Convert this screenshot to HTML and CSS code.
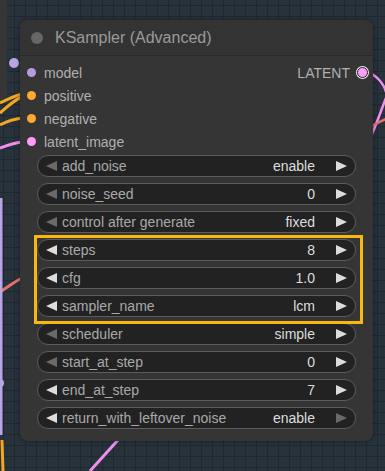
FILE: index.html
```html
<!DOCTYPE html>
<html>
<head>
<meta charset="utf-8">
<link rel="stylesheet" href="styles.css">
</head>
<body>
<div class="canvas">
  <svg class="wires" width="385" height="471" viewBox="0 0 385 471">
    <path d="M0 103 C8 99 14 96 22 94" stroke="#f5a623" stroke-width="3" fill="none"/>
    <path d="M0 113 C8 106 14 100 22 97" stroke="#f5a623" stroke-width="3" fill="none"/>
    <path d="M0 125 C8 121 14 119 22 118" stroke="#f5a623" stroke-width="3" fill="none"/>
    <path d="M0 148 C8 145 14 143 22 142" stroke="#f08ef0" stroke-width="3" fill="none"/>
    <path d="M0 292 C8 287 14 282 22 278" stroke="#e8706a" stroke-width="3" fill="none"/>
    <path d="M1 198 L1 435" stroke="#b9a4e6" stroke-width="3" fill="none"/>
    <path d="M2 440 L3 471" stroke="#f5a623" stroke-width="3" fill="none"/>
    <path d="M118 440 L90 471" stroke="#f08ef0" stroke-width="3" fill="none"/>
    <path d="M366 72 C376 74 384 84 386 92" stroke="#f08ef0" stroke-width="2.5" fill="none"/>
    <path d="M372 134 C378 120 382 108 386 98" stroke="#f08ef0" stroke-width="2.5" fill="none"/>
    <path d="M372 126 C377 123 381 121 386 119" stroke="#e8706a" stroke-width="2.5" fill="none"/>
    <circle cx="0" cy="383" r="4" fill="#b9a4e6"/>
    <circle cx="1" cy="55" r="3" fill="none" stroke="#111" stroke-width="1.2"/>
  </svg>
  <div class="side-node"></div>
  <div class="ghost-dot"></div>

  <div class="node">
    <div class="title">
      <span class="title-dot"></span>
      <span class="title-text">KSampler (Advanced)</span>
    </div>
    <div class="io">
      <div class="row">
        <div class="input"><span class="slot model"></span>model</div>
        <div class="output">LATENT<span class="slot out"></span></div>
      </div>
      <div class="row"><div class="input"><span class="slot cond"></span>positive</div></div>
      <div class="row"><div class="input"><span class="slot cond"></span>negative</div></div>
      <div class="row"><div class="input"><span class="slot latent"></span>latent_image</div></div>
    </div>
    <div class="widgets">
      <div class="widget"><span class="arr left dim"></span><span class="label">add_noise</span><span class="value">enable</span><span class="arr right"></span></div>
      <div class="widget"><span class="arr left dim"></span><span class="label">noise_seed</span><span class="value">0</span><span class="arr right"></span></div>
      <div class="widget"><span class="arr left dim"></span><span class="label">control after generate</span><span class="value">fixed</span><span class="arr right"></span></div>
      <div class="widget"><span class="arr left"></span><span class="label">steps</span><span class="value">8</span><span class="arr right"></span></div>
      <div class="widget"><span class="arr left"></span><span class="label">cfg</span><span class="value">1.0</span><span class="arr right"></span></div>
      <div class="widget"><span class="arr left"></span><span class="label">sampler_name</span><span class="value">lcm</span><span class="arr right"></span></div>
      <div class="widget"><span class="arr left dim"></span><span class="label">scheduler</span><span class="value">simple</span><span class="arr right"></span></div>
      <div class="widget"><span class="arr left dim"></span><span class="label">start_at_step</span><span class="value">0</span><span class="arr right"></span></div>
      <div class="widget"><span class="arr left"></span><span class="label">end_at_step</span><span class="value">7</span><span class="arr right"></span></div>
      <div class="widget"><span class="arr left"></span><span class="label">return_with_leftover_noise</span><span class="value">enable</span><span class="arr right dim"></span></div>
    </div>
    <div class="highlight"></div>
  </div>
</div>
</body>
</html>
```

FILE: styles.css
```css
* { box-sizing: border-box; }
html, body { margin: 0; padding: 0; }
body {
  width: 385px;
  height: 471px;
  overflow: hidden;
  font-family: "Liberation Sans", Arial, sans-serif;
}
.canvas {
  position: relative;
  width: 385px;
  height: 471px;
  background-color: #27323b;
  background-image:
    linear-gradient(to right, #1f2830 1px, transparent 1px),
    linear-gradient(to bottom, #1f2830 1px, transparent 1px);
  background-size: 11px 11px;
  background-position: 3px 5px;
  overflow: hidden;
}
.wires { position: absolute; left: 0; top: 0; }
.side-node {
  position: absolute;
  left: -10px;
  top: -10px;
  width: 17px;
  height: 110px;
  background: #353535;
  border-radius: 0 0 6px 0;
}
.ghost-dot {
  position: absolute;
  left: 9px;
  top: 58px;
  width: 10px;
  height: 10px;
  border-radius: 50%;
  background: #b9a4e6;
}
.node {
  position: absolute;
  left: 20px;
  top: 20px;
  width: 353px;
  height: 421px;
  background: #353535;
  border-radius: 8px;
  box-shadow: 0 0 4px rgba(0, 0, 0, 0.45);
}
.title {
  height: 36px;
  display: flex;
  align-items: center;
  background: #333333;
  border-radius: 8px 8px 0 0;
  border-bottom: 1px solid #2a2a2a;
  padding-left: 11px;
}
.title-dot {
  width: 12px;
  height: 12px;
  border-radius: 50%;
  background: #666666;
  margin-right: 12px;
}
.title-text {
  font-size: 16px;
  color: #9a9a9a;
}
.io { padding-top: 5px; }
.row {
  height: 23px;
  display: flex;
  align-items: center;
  justify-content: space-between;
  font-size: 14px;
  color: #b0b0b0;
}
.input {
  display: flex;
  align-items: center;
  padding-left: 7px;
}
.output {
  display: flex;
  align-items: center;
  padding-right: 5px;
}
.slot {
  width: 9px;
  height: 9px;
  border-radius: 50%;
  display: inline-block;
}
.input .slot { margin-right: 8px; }
.slot.model { background: #b39ddb; }
.slot.cond { background: #ffa931; }
.slot.latent { background: #ff9cf9; }
.slot.out {
  width: 11px;
  height: 11px;
  background: #ff9cf9;
  border: 1.5px solid #222;
  box-shadow: 0 0 0 1px #eeeeee;
  margin-left: 7px;
}
.widgets {
  padding: 2px 17px 0 17px;
  display: flex;
  flex-direction: column;
  gap: 6px;
}
.widget {
  height: 22px;
  border: 1px solid #5c5c5c;
  border-radius: 11px;
  background: #222222;
  display: flex;
  align-items: center;
  font-size: 14px;
  padding: 0 8px 0 8px;
}
.arr {
  width: 0;
  height: 0;
  border-top: 5.5px solid transparent;
  border-bottom: 5.5px solid transparent;
  flex: none;
}
.arr.left { border-right: 11px solid #dddddd; }
.arr.right { border-left: 11px solid #dddddd; margin-left: 21px; }
.arr.left.dim { border-right-color: #6a6a6a; }
.arr.right.dim { border-left-color: #6a6a6a; }
.label {
  color: #a9a9a9;
  margin-left: 5px;
  flex: 1;
  white-space: nowrap;
  overflow: hidden;
}
.value {
  color: #dddddd;
  margin-left: 8px;
  white-space: nowrap;
}
.highlight {
  position: absolute;
  left: 14px;
  top: 215px;
  width: 329px;
  height: 89px;
  border: 3px solid #fab70c;
}
```
